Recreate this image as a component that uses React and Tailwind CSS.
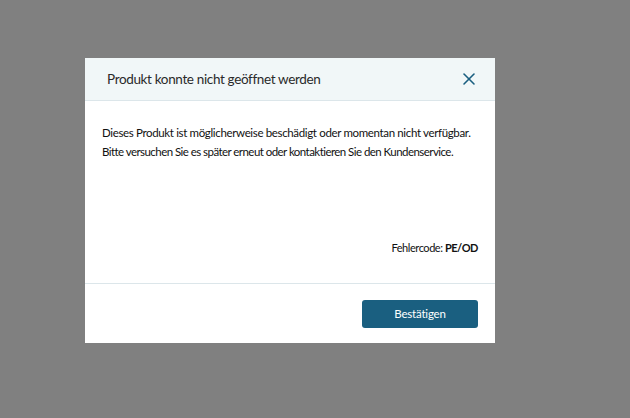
import { X } from "lucide-react";

const App = () => {
    return (
        <div className="w-[630px] h-[418px] bg-[#808080] pt-[58px] pl-[85px]" style={{ fontFamily: "Lato, 'Noto Sans', sans-serif" }}>
            <div className="w-[410px] h-[285px] bg-white flex flex-col">
                <div className="h-[43px] bg-[#f1f7f8] border-b border-[#dce6ea] flex items-center justify-between pl-[22px] pr-[16px]">
                    <h1 className="text-[13.5px] tracking-[-0.35px] text-[#2a2a2a]">Produkt konnte nicht geöffnet werden</h1>
                    <button className="text-[#1a5f80]">
                        <X size={20} strokeWidth={1.9} />
                    </button>
                </div>
                <div className="flex-1 flex flex-col px-[17px] pt-[22px] text-[11.5px] text-[#111] leading-[19px]">
                    <p className="tracking-[-0.35px]">Dieses Produkt ist möglicherweise beschädigt oder momentan nicht verfügbar.</p>
                    <p className="tracking-[-0.55px]">Bitte versuchen Sie es später erneut oder kontaktieren Sie den Kundenservice.</p>
                    <p className="mt-auto mb-[26px] text-right text-[11px] tracking-[-0.45px]">Fehlercode: <span className="font-bold">PE/OD</span></p>
                </div>
                <div className="h-[60px] border-t border-[#dce6ea] flex items-center justify-end px-[17px]">
                    <button className="w-[116px] h-[28px] rounded-[3px] bg-[#1a5f80] text-white text-[11.5px] tracking-[-0.2px]">Bestätigen</button>
                </div>
            </div>
        </div>
    )
}

export default App
